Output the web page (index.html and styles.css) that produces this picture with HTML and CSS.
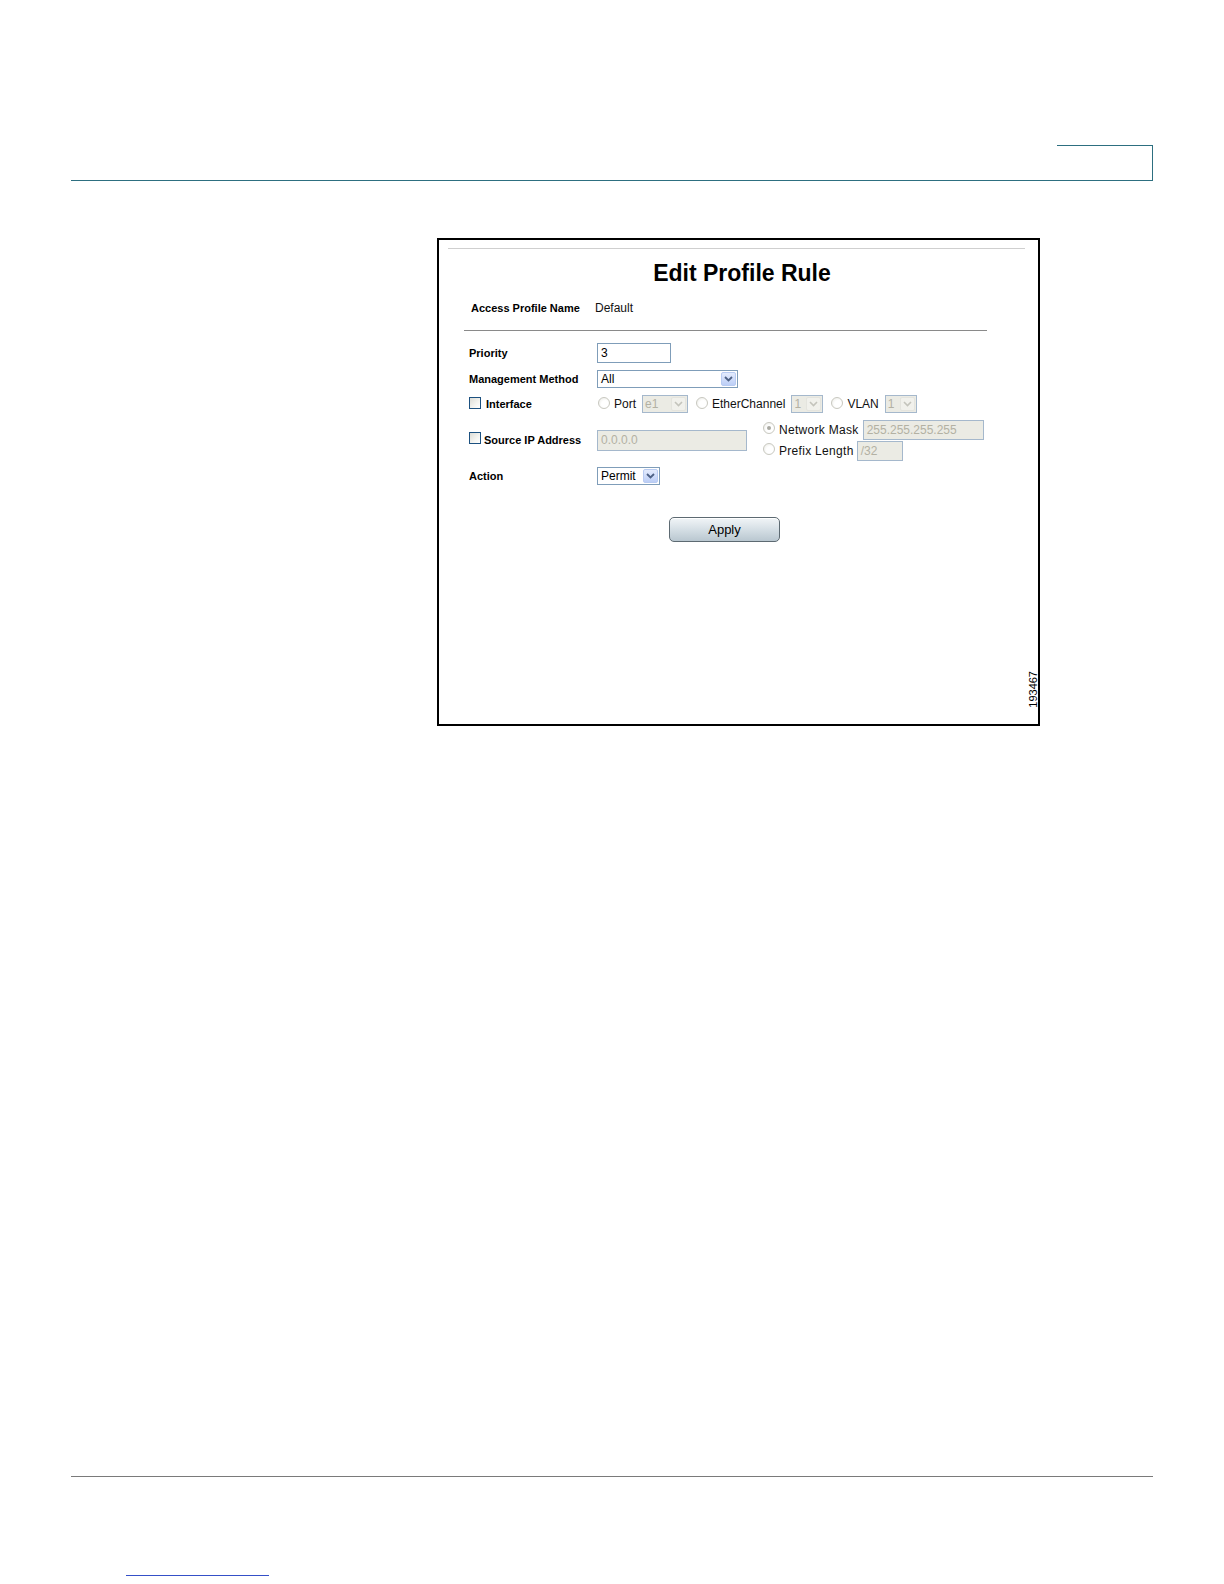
FILE: index.html
```html
<!DOCTYPE html>
<html>
<head>
<meta charset="utf-8">
<link rel="stylesheet" href="styles.css">
<title>Edit Profile Rule</title>
</head>
<body>
<div class="page">
  <div class="header"><div class="tab"></div></div>

  <div class="frame">
    <div class="topline"></div>
    <div class="title">Edit Profile Rule</div>
    <div class="namerow">
      <span class="lbl namelbl">Access Profile Name</span>
      <span class="txt">Default</span>
    </div>
    <div class="divider"></div>

    <div class="form">
      <div class="row r-priority">
        <span class="lbl col1">Priority</span>
        <div class="input w-priority"><span class="val">3</span></div>
      </div>

      <div class="row r-mgmt">
        <span class="lbl col1">Management Method</span>
        <div class="select w-mgmt"><span class="val">All</span><span class="arrow"><svg width="9" height="6" viewBox="0 0 9 6"><path d="M1 1 L4.5 4.5 L8 1" fill="none" stroke="#4d6185" stroke-width="1.8"/></svg></span></div>
      </div>

      <div class="row r-iface">
        <span class="lbl col1 chk"><span class="checkbox"></span><span class="chklbl">Interface</span></span>
        <div class="opts">
          <span class="radio"></span><span class="txt otxt">Port</span>
          <div class="select dis w-port"><span class="val">e1</span><span class="arrow"><svg width="9" height="6" viewBox="0 0 9 6"><path d="M1 1 L4.5 4.5 L8 1" fill="none" stroke="#c4c4bc" stroke-width="1.6"/></svg></span></div>
          <span class="radio r2"></span><span class="txt otxt">EtherChannel</span>
          <div class="select dis w-small"><span class="val">1</span><span class="arrow"><svg width="9" height="6" viewBox="0 0 9 6"><path d="M1 1 L4.5 4.5 L8 1" fill="none" stroke="#c4c4bc" stroke-width="1.6"/></svg></span></div>
          <span class="radio r3"></span><span class="txt otxt">VLAN</span>
          <div class="select dis w-small"><span class="val">1</span><span class="arrow"><svg width="9" height="6" viewBox="0 0 9 6"><path d="M1 1 L4.5 4.5 L8 1" fill="none" stroke="#c4c4bc" stroke-width="1.6"/></svg></span></div>
        </div>
      </div>

      <div class="row r-src">
        <span class="lbl col1 chk"><span class="checkbox"></span><span class="chklbl src">Source IP Address</span></span>
        <div class="input dis w-ip"><span class="val">0.0.0.0</span></div>
        <div class="maskcol">
          <div class="maskrow"><span class="radio on"></span><span class="txt mtxt">Network Mask</span><div class="input dis w-mask"><span class="val">255.255.255.255</span></div></div>
          <div class="maskrow"><span class="radio"></span><span class="txt mtxt">Prefix Length</span><div class="input dis w-pref"><span class="val">/32</span></div></div>
        </div>
      </div>

      <div class="row r-action">
        <span class="lbl col1">Action</span>
        <div class="select w-action"><span class="val">Permit</span><span class="arrow"><svg width="9" height="6" viewBox="0 0 9 6"><path d="M1 1 L4.5 4.5 L8 1" fill="none" stroke="#4d6185" stroke-width="1.8"/></svg></span></div>
      </div>
    </div>

    <div class="btnrow"><div class="apply">Apply</div></div>

    <div class="figno">193467</div>
  </div>

  <div class="footer"></div>
  <div class="link"></div>
</div>
</body>
</html>
```

FILE: styles.css
```css
html, body {
  margin: 0;
  padding: 0;
  background: #fff;
}
body {
  font-family: "Liberation Sans", Arial, sans-serif;
  color: #000;
}
.page {
  width: 1224px;
  height: 1584px;
  overflow: hidden;
  display: flex;
  flex-direction: column;
}
.header {
  margin: 145px 71px 0 71px;
  height: 35px;
  display: flex;
  justify-content: flex-end;
  border-bottom: 1.5px solid #2d6f80;
}
.tab {
  width: 95px;
  border-top: 1.5px solid #2d6f80;
  border-right: 1.5px solid #2d6f80;
}
.frame {
  position: relative;
  box-sizing: border-box;
  margin: 57px 0 0 437px;
  width: 603px;
  height: 488px;
  border: 2px solid #000;
  display: flex;
  flex-direction: column;
}
.topline {
  margin: 8px 13px 0 9px;
  border-top: 1px solid #cfcfcf;
}
.title {
  margin-top: 11px;
  height: 26px;
  line-height: 26px;
  padding-left: 7px;
  text-align: center;
  font-size: 23px;
  font-weight: bold;
}
.namerow {
  margin-top: 11px;
  height: 22px;
  display: flex;
  align-items: center;
  padding-left: 32px;
}
.lbl {
  font-size: 11px;
  font-weight: bold;
}
.namelbl {
  width: 124px;
}
.txt {
  font-size: 12px;
  color: #111;
}
.divider {
  margin: 11px 51px 0 25px;
  border-top: 1px solid #8a8a8a;
}
.form {
  padding-left: 30px;
  display: flex;
  flex-direction: column;
}
.row {
  display: flex;
  align-items: center;
}
.col1 {
  width: 128px;
  flex-shrink: 0;
}
.r-priority { margin-top: 12px; height: 20px; }
.r-mgmt { margin-top: 7px; height: 18px; }
.r-iface { margin-top: 7px; height: 18px; }
.r-src { margin-top: 6px; height: 42px; }
.r-action { margin-top: 6px; height: 18px; }

.chk {
  display: flex;
  align-items: center;
}
.checkbox {
  box-sizing: border-box;
  width: 12px;
  height: 12px;
  border: 1px solid #1c5180;
  background: linear-gradient(135deg, #dcdcd6 0%, #f4f4f0 60%, #ffffff 100%);
  margin-top: -3px;
}
.chklbl {
  margin-left: 5px;
}
.chklbl.src {
  margin-left: 3px;
}
.r-src .chk .checkbox {
  margin-top: -4px;
}

.input, .select {
  box-sizing: border-box;
  border: 1px solid #7f9db9;
  background: #fff;
  font-size: 12px;
  display: flex;
  align-items: center;
  overflow: hidden;
}
.input .val, .select .val {
  padding-left: 3px;
  flex: 1;
  white-space: nowrap;
}
.input.dis, .select.dis {
  background: #ebebe4;
  border-color: #a5b8cc;
  color: #b3b1a3;
}
.w-priority { width: 74px; height: 20px; }
.w-mgmt { width: 141px; height: 18px; }
.w-action { width: 63px; height: 18px; }
.w-port { width: 46px; height: 18px; margin-left: 6px; }
.w-small { width: 32px; height: 18px; margin-left: 6px; }
.w-ip { width: 150px; height: 21px; }
.w-mask { width: 121px; height: 20px; margin-left: 4px; }
.w-pref { width: 46px; height: 20px; margin-left: 3px; }

.select .arrow {
  box-sizing: border-box;
  width: 15px;
  height: 14px;
  margin-right: 1px;
  border: 1px solid #b8cbf2;
  border-radius: 2px;
  background: linear-gradient(#e3ebfd, #bccef6);
  display: flex;
  align-items: center;
  justify-content: center;
}
.select.dis .arrow {
  border-color: #e4e4de;
  background: #f1f1ec;
}
.select.dis .val {
  padding-left: 2px;
}

.opts {
  display: flex;
  align-items: center;
}
.radio {
  box-sizing: border-box;
  width: 12px;
  height: 12px;
  border-radius: 50%;
  border: 1px solid #c8c8c0;
  background: radial-gradient(circle at 60% 60%, #ffffff 40%, #e8e8e2 100%);
  margin-left: 1px;
  margin-top: -3px;
  flex-shrink: 0;
  position: relative;
}
.radio.r2 { margin-left: 8px; }
.radio.r3 { margin-left: 8px; }
.radio.on::after {
  content: "";
  position: absolute;
  left: 3px;
  top: 3px;
  width: 4px;
  height: 4px;
  border-radius: 50%;
  background: #a9a9a2;
}
.otxt {
  margin-left: 4px;
}
.maskcol {
  margin-left: 15px;
  display: flex;
  flex-direction: column;
  gap: 1px;
}
.maskrow {
  height: 20px;
  display: flex;
  align-items: center;
}
.mtxt {
  margin-left: 4px;
  letter-spacing: 0.3px;
}
.btnrow {
  margin-top: 32px;
  padding-left: 230px;
  display: flex;
}
.apply {
  box-sizing: border-box;
  width: 111px;
  height: 25px;
  border: 1px solid #5d6a72;
  border-radius: 5px;
  background: linear-gradient(#f1f5f7 0%, #d8e1e7 45%, #b9c7d0 100%);
  box-shadow: inset 0 1px 0 #ffffff;
  display: flex;
  align-items: center;
  justify-content: center;
  font-size: 13px;
  color: #000;
}
.figno {
  position: absolute;
  right: -1px;
  bottom: 16px;
  writing-mode: vertical-rl;
  transform: rotate(180deg);
  font-size: 11px;
  line-height: 11px;
  color: #000;
}
.footer {
  margin: 750px 71px 0 71px;
  border-top: 1.5px solid #7a7a7a;
}
.link {
  margin: 98px 0 0 126px;
  width: 143px;
  border-top: 1px solid #3550c8;
}
```
